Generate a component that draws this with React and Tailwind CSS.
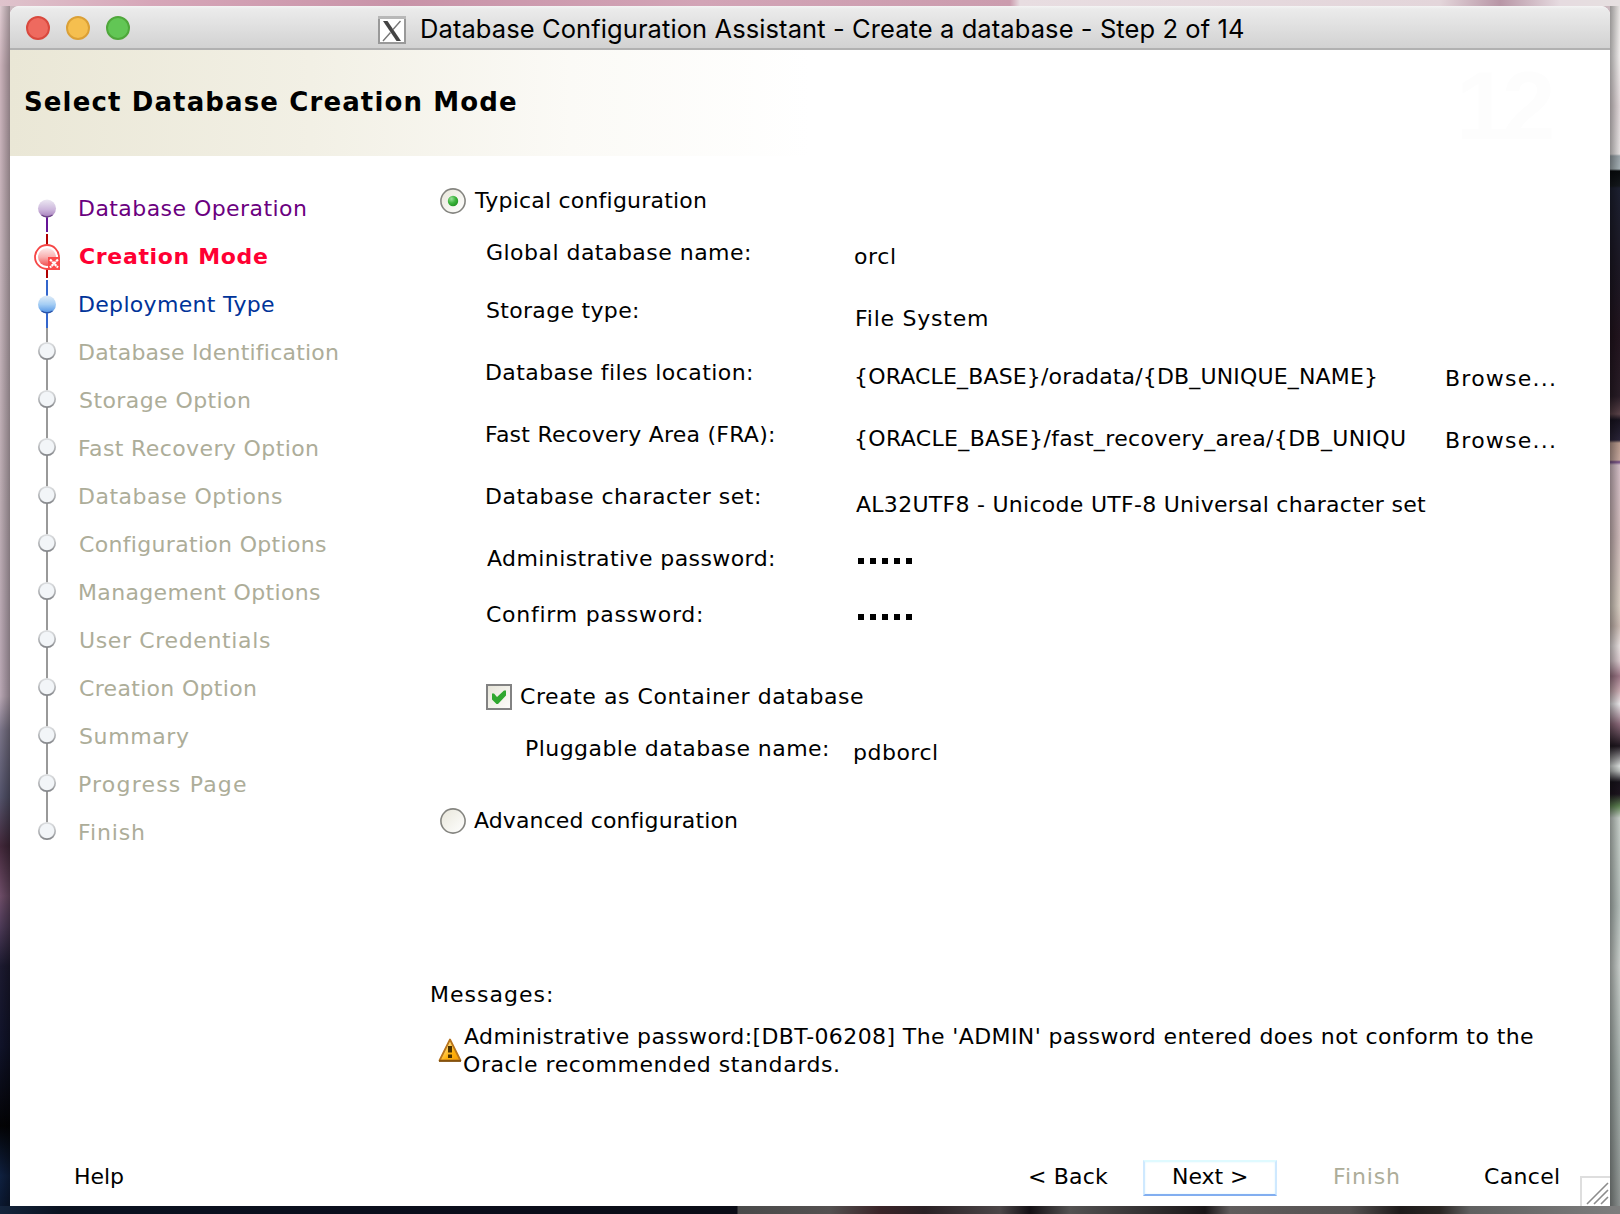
import React from "react";

const canvas = document.createElement("canvas");

// Text whose visible glyphs start at the box's left edge and span exactly `w` pixels.
function Label({ w, size = 22, weight = 400, family = "DejaVu Sans", className = "leading-[28px]", children }) {
  const ctx = canvas.getContext("2d");
  ctx.font = `${weight} ${size}px "${family}"`;
  const m = ctx.measureText(children);
  const ink = m.actualBoundingBoxRight + m.actualBoundingBoxLeft;
  const spacing = (w - ink) / (children.length - 1);
  return (
    <span
      className={"block shrink-0 whitespace-pre " + className}
      style={{
        fontFamily: `"${family}", sans-serif`,
        fontSize: size,
        fontWeight: weight,
        letterSpacing: spacing,
        marginLeft: m.actualBoundingBoxLeft,
        fontVariantLigatures: "none",
      }}
    >
      {children}
    </span>
  );
}

const steps = [
  ["Database Operation", 226, "done"],
  ["Creation Mode", 187, "current"],
  ["Deployment Type", 194, "next"],
  ["Database Identification", 258],
  ["Storage Option", 170],
  ["Fast Recovery Option", 238],
  ["Database Options", 202],
  ["Configuration Options", 246],
  ["Management Options", 240],
  ["User Credentials", 190],
  ["Creation Option", 176],
  ["Summary", 109],
  ["Progress Page", 166],
  ["Finish", 64],
];

const stepColor = {
  done: "text-[#6b0080]",
  current: "text-[#ff0033]",
  next: "text-[#003399]",
  todo: "text-[#adad99]",
};

function StepIcon({ kind, last }) {
  if (kind === "done")
    return (
      <svg width="30" height="48" viewBox="0 0 30 48" className="shrink-0">
        <defs>
          <linearGradient id="sd" x1="0" y1="0" x2="0" y2="1">
            <stop offset="0" stopColor="#ece8f2" />
            <stop offset=".55" stopColor="#cdb7dc" />
            <stop offset="1" stopColor="#a47cba" />
          </linearGradient>
        </defs>
        <path d="M15 24V41" stroke="#661496" strokeWidth="2" />
        <path d="M15 43V48" stroke="#b00000" strokeWidth="2" />
        <circle cx="15" cy="17.500" r="9" fill="url(#sd)" />
        <path d="M9.500 24Q15 27.500 20.500 24" fill="none" stroke="#6e4688" strokeWidth="1.400" />
      </svg>
    );
  if (kind === "current")
    return (
      <svg width="30" height="48" viewBox="0 0 30 48" className="shrink-0">
        <defs>
          <linearGradient id="sc" x1="0" y1="0" x2="0" y2="1">
            <stop offset="0" stopColor="#fdeaea" />
            <stop offset=".5" stopColor="#f9b0b0" />
            <stop offset="1" stopColor="#f05050" />
          </linearGradient>
        </defs>
        <path d="M15 0V39" stroke="#b00000" strokeWidth="2" />
        <path d="M15 41V48" stroke="#3366cc" strokeWidth="2" />
        <circle cx="15" cy="18" r="12" fill="#fff" stroke="#f64646" strokeWidth="1.800" />
        <circle cx="15" cy="18" r="9" fill="url(#sc)" />
        <rect x="16" y="18" width="12" height="13" fill="#fb4a4a" />
        <path d="M18 20.500L26 28.500M26 20.500L18 28.500" stroke="#fff" strokeWidth="2.200" strokeDasharray="2.600 .6" />
      </svg>
    );
  if (kind === "next")
    return (
      <svg width="30" height="48" viewBox="0 0 30 48" className="shrink-0">
        <defs>
          <linearGradient id="sn" x1="0" y1="0" x2="0" y2="1">
            <stop offset="0" stopColor="#e2edf8" />
            <stop offset=".5" stopColor="#a4cdf4" />
            <stop offset="1" stopColor="#4c90e4" />
          </linearGradient>
        </defs>
        <path d="M15 0V41" stroke="#3366cc" strokeWidth="2" />
        <path d="M15 41V48" stroke="#999999" strokeWidth="2" />
        <circle cx="15" cy="17.500" r="9" fill="url(#sn)" />
        <path d="M9.500 24Q15 27.500 20.500 24" fill="none" stroke="#2a52a8" strokeWidth="1.400" />
      </svg>
    );
  return (
    <svg width="30" height="48" viewBox="0 0 30 48" className="shrink-0">
      <defs>
        <linearGradient id="st" x1="0" y1="0" x2="0" y2="1">
          <stop offset="0" stopColor="#dddfe1" />
          <stop offset=".6" stopColor="#b4b6b9" />
          <stop offset="1" stopColor="#84868a" />
        </linearGradient>
      </defs>
      <path d={last ? "M15 0V10" : "M15 0V48"} stroke="#999999" strokeWidth="2" />
      <circle cx="15" cy="16" r="8.200" fill="#f2f5f8" stroke="url(#st)" strokeWidth="1.800" />
    </svg>
  );
}

function Radio({ id, checked }) {
  return (
    <svg width="26" height="26" viewBox="0 0 26 26" className="mt-px shrink-0">
      <defs>
        <linearGradient id={id} x1="0" y1="0" x2="1" y2="1">
          <stop offset="0" stopColor="#e8e6da" />
          <stop offset="1" stopColor="#ffffff" />
        </linearGradient>
        <radialGradient id={id + "dot"} cx=".35" cy=".3" r=".8">
          <stop offset="0" stopColor="#9be09b" />
          <stop offset=".5" stopColor="#3cb43c" />
          <stop offset="1" stopColor="#1f8f1f" />
        </radialGradient>
      </defs>
      <circle cx="13" cy="13" r="12.100" fill={`url(#${id})`} stroke="#858580" strokeWidth="1.600" />
      {checked && <circle cx="13" cy="13" r="5.200" fill={`url(#${id}dot)`} />}
    </svg>
  );
}

function Field({ label, w, h, children }) {
  return (
    <div className={"flex shrink-0 items-start pl-[57px] " + h}>
      <div className="w-[368px] shrink-0">
        <Label w={w}>{label}</Label>
      </div>
      {children}
    </div>
  );
}

function Dots() {
  return (
    <div className="ml-[3px] mt-[13px] flex gap-1.5">
      {[0, 1, 2, 3, 4].map((i) => (
        <span key={i} className="size-1.5 bg-black" />
      ))}
    </div>
  );
}

export default function App() {
  return (
    <div className="flex h-[1214px] w-[1620px] flex-col overflow-hidden bg-[#0b0d18]">
      <div className="h-1.5 shrink-0 bg-[linear-gradient(90deg,#dfc3cc_0,#d6a6b8_150px,#c893a8_400px,#d2a4b6_700px,#cb9cae_1010px,#e8dde1_1020px,#e3d5da_1440px,#b896a6_1500px,#e6dbe0_1560px,#e6e0e0_1620px)]" />
      <div className="flex h-[1200px] shrink-0 bg-[#cbb9bf]">
        <div className="w-2.5 shrink-0 bg-[linear-gradient(90deg,transparent,rgba(0,0,0,0.3)),linear-gradient(180deg,#e0ccd2_0,#cbb3bb_60px,#c6b4bb_250px,#bdadb4_500px,#b9a7b4_690px,#7a7488_725px,#54546c_790px,#42283a_840px,#6e4d68_890px,#4e3b58_920px,#1c1a30_960px,#10132a_1040px,#030305_1120px,#0f2040_1170px,#0b1830_1200px)]" />
        <div className="flex w-[1600px] shrink-0 flex-col overflow-hidden rounded-t-[9px] bg-white">
          <div className="flex h-11 shrink-0 items-start border-b-2 border-b-[#b1b1b1] bg-[linear-gradient(180deg,#f4f4f4_0,#ebebeb_3px,#d2d2d2_42px)]">
            <div className="ml-4 mt-2.5 flex w-[352px] shrink-0 gap-4">
              <span className="size-6 rounded-full border-2 border-[#d9493e] bg-[#ee6a5f]" />
              <span className="size-6 rounded-full border-2 border-[#dba036] bg-[#f5bf4f]" />
              <span className="size-6 rounded-full border-2 border-[#4fa73b] bg-[#62c655]" />
            </div>
            <svg width="28" height="28" viewBox="0 0 28 28" className="mt-2.5 shrink-0">
              <rect x="1" y="1" width="26" height="26" fill="#fff" stroke="#999" strokeWidth="2" />
              <rect x="0" y="0" width="28" height="3" fill="#b8b8b8" />
              <path d="M5 5H9.500L23 25H18.500Z" fill="#444" />
              <path d="M22.500 5L15 13.500M12.500 16.500L5 25" stroke="#777" strokeWidth="1.400" />
            </svg>
            <div className="ml-4 mt-[9px]">
              <Label w={821} size={25.5} family="Inter">
                Database Configuration Assistant - Create a database - Step 2 of 14
              </Label>
            </div>
          </div>

          <div className="flex h-[106px] shrink-0 items-start justify-between bg-[linear-gradient(90deg,#eae7d6_0,#f2f0e5_300px,#fbfaf6_560px,#ffffff_800px)]">
            <div className="ml-[15px] mt-[38px]">
              <Label w={491} size={26} weight={700}>
                Select Database Creation Mode
              </Label>
            </div>
            <div className="mr-[62px] mt-2 text-[#fdfdfd]">
              <Label w={90} size={96} weight={700} family="Liberation Sans" className="leading-[96px]">
                12
              </Label>
            </div>
          </div>

          <div className="flex h-[990px] shrink-0">
            <div className="flex w-[420px] shrink-0 flex-col pt-[35px]">
              {steps.map(([name, w, kind], i) => (
                <div key={name} className={"flex h-12 shrink-0 items-start pl-[22px] " + stepColor[kind || "todo"]}>
                  <StepIcon kind={kind} last={i === steps.length - 1} />
                  <div className="ml-[18px] mt-1">
                    <Label w={w} weight={kind === "current" ? 700 : 400}>
                      {name}
                    </Label>
                  </div>
                </div>
              ))}
            </div>

            <div className="flex w-[1180px] shrink-0 flex-col pt-[31px]">
              <div className="flex h-[52px] shrink-0 items-start pl-2.5">
                <Radio id="typical" checked />
                <div className="ml-2">
                  <Label w={232}>Typical configuration</Label>
                </div>
              </div>
              <Field label="Global database name:" w={262} h="h-[58px]">
                <div className="mt-1">
                  <Label w={40}>orcl</Label>
                </div>
              </Field>
              <Field label="Storage type:" w={150} h="h-[62px]">
                <div className="ml-0.5 mt-2">
                  <Label w={130}>File System</Label>
                </div>
              </Field>
              <Field label="Database files location:" w={264} h="h-[62px]">
                <div className="ml-px mt-1 w-[591px]">
                  <Label w={520}>{"{ORACLE_BASE}/oradata/{DB_UNIQUE_NAME}"}</Label>
                </div>
                <div className="mt-1.5">
                  <Label w={107}>Browse...</Label>
                </div>
              </Field>
              <Field label="Fast Recovery Area (FRA):" w={286} h="h-[62px]">
                <div className="ml-px mt-1 w-[591px]">
                  <Label w={549}>{"{ORACLE_BASE}/fast_recovery_area/{DB_UNIQU"}</Label>
                </div>
                <div className="mt-1.5">
                  <Label w={107}>Browse...</Label>
                </div>
              </Field>
              <Field label="Database character set:" w={272} h="h-[62px]">
                <div className="ml-px mt-2">
                  <Label w={570}>AL32UTF8 - Unicode UTF-8 Universal character set</Label>
                </div>
              </Field>
              <Field label="Administrative password:" w={286} h="h-[56px]">
                <Dots />
              </Field>
              <Field label="Confirm password:" w={214} h="h-[82px]">
                <Dots />
              </Field>
              <div className="flex h-[52px] shrink-0 items-start pl-14">
                <svg width="26" height="26" viewBox="0 0 26 26" className="mt-px shrink-0">
                  <defs>
                    <linearGradient id="cb" x1="0" y1="0" x2="1" y2="1">
                      <stop offset="0" stopColor="#e6e4d8" />
                      <stop offset="1" stopColor="#fdfdfb" />
                    </linearGradient>
                  </defs>
                  <rect x="1" y="1" width="24" height="24" fill="url(#cb)" stroke="#828282" strokeWidth="2" />
                  <path d="M6 9.500H8L11 13L18 6.500H20V11.500L12 20H10.500L6 15.500Z" fill="#2fa82f" />
                </svg>
                <div className="ml-[9px]">
                  <Label w={342}>Create as Container database</Label>
                </div>
              </div>
              <div className="flex h-[72px] shrink-0 items-start pl-[97px]">
                <div className="w-[328px] shrink-0">
                  <Label w={300}>Pluggable database name:</Label>
                </div>
                <div className="mt-1">
                  <Label w={82}>pdborcl</Label>
                </div>
              </div>
              <div className="flex h-[174px] shrink-0 items-start pl-2.5">
                <Radio id="advanced" />
                <div className="ml-2">
                  <Label w={263}>Advanced configuration</Label>
                </div>
              </div>
              <div className="h-[42px] shrink-0 pl-0.5">
                <Label w={119}>Messages:</Label>
              </div>
              <div className="flex shrink-0 items-start pl-2">
                <svg width="24" height="24" viewBox="0 0 24 24" className="mt-[15px] shrink-0">
                  <defs>
                    <linearGradient id="wa" x1="0" y1="0" x2="1" y2="1">
                      <stop offset="0.2" stopColor="#ffe9a0" />
                      <stop offset=".6" stopColor="#ffb310" />
                      <stop offset="1" stopColor="#f59a00" />
                    </linearGradient>
                  </defs>
                  <path d="M12 1.500L22.500 22.500H1.500Z" fill="url(#wa)" stroke="#b8741c" strokeWidth="1.800" strokeLinejoin="round" />
                  <path d="M1 23H23" stroke="#7a4a08" strokeWidth="1.600" />
                  <path d="M12 8V14.500M12 16.500V20" stroke="#4a3000" strokeWidth="4" />
                </svg>
                <div className="ml-0.5">
                  <Label w={1069}>
                    Administrative password:[DBT-06208] The 'ADMIN' password entered does not conform to the
                  </Label>
                  <Label w={374}>Oracle recommended standards.</Label>
                </div>
              </div>
            </div>
          </div>

          <div className="flex h-[60px] shrink-0 items-start">
            <div className="ml-[66px] mt-[17px] w-[954px] shrink-0">
              <Label w={47}>Help</Label>
            </div>
            <div className="mt-[17px] w-[113px] shrink-0">
              <Label w={78}>{"< Back"}</Label>
            </div>
            <div className="mt-3.5 h-9 w-[134px] shrink-0 border-2 border-[#cfe9ff] border-b-[#82aef0] border-t-[#dffaff] bg-white pl-[29px] pt-px shadow-[inset_0_0_2px_#d8f4ff]">
              <Label w={73}>{"Next >"}</Label>
            </div>
            <div className="ml-[58px] mt-[17px] w-[150px] shrink-0 text-[#adad99]">
              <Label w={64}>Finish</Label>
            </div>
            <div className="mt-[17px] w-[95px] shrink-0">
              <Label w={74}>Cancel</Label>
            </div>
            <svg width="30" height="30" viewBox="0 0 30 30" className="mt-[30px] shrink-0">
              <path d="M0 1H30M1 0V30" stroke="#dedede" strokeWidth="2" />
              <path d="M7 28L28 7M14 28L28 14M21 28L28 21" stroke="#8c8c8c" strokeWidth="1.600" />
            </svg>
          </div>
        </div>
        <div className="w-2.5 shrink-0 bg-[linear-gradient(90deg,rgba(0,0,0,0.35),transparent),linear-gradient(180deg,#e8e4e2_0,#efeceb_50px,#e0d6d8_100px,#e4e0e0_148px,#9aa4aa_150px,#a4b0b4_163px,#080a0c_165px,#14181c_180px,#1c2030_182px,#1c1824_260px,#22141e_330px,#281c26_390px,#5a4248_408px,#17131f_414px,#2a2438_434px,#b89a8c_437px,#c4a69c_454px,#6c4680_456px,#d2bcc4_459px,#cdb8b8_530px,#d6ccc0_600px,#c8b8b0_620px,#e6dede_640px,#d8c8cc_655px,#9a7484_670px,#c8aab0_685px,#e8e6e8_698px,#8a6878_718px,#1e161e_740px,#d8dcda_760px,#b8bcba_765px,#16121a_776px,#1c141e_788px,#5c8050_800px,#c6cec8_812px,#b2bcb8_900px,#c6ccc8_960px,#a4aeaa_1060px,#8a908e_1200px)]" />
      </div>
      <div className="h-2 shrink-0 bg-[linear-gradient(90deg,#14243c_0,#0a1220_60px,#0a0e1c_350px,#0a0c16_737px,#4a4a4a_738px,#545050_830px,#3a2428_880px,#2a2024_925px,#4c4648_1000px,#141014_1030px,#545252_1070px,#1a1618_1205px,#605c5c_1230px,#565252_1350px,#1e1a1a_1400px,#2a2624_1440px,#606060_1470px,#7e7e7e_1620px)]" />
    </div>
  );
}
